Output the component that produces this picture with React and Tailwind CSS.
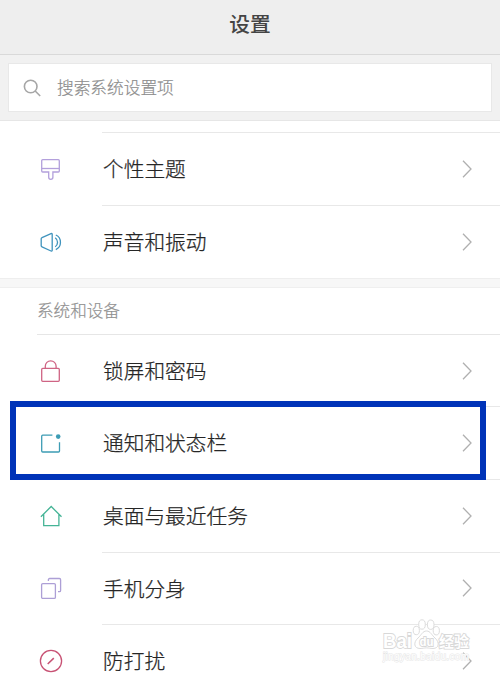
import { clsx } from 'clsx'

const BrushIcon = () => (
  <>
    <path d="M3.7 2.7h15.6a1 1 0 0 1 1 1v10.3a1 1 0 0 1-1 1h-5.4v5.2a2 2 0 0 1-4.2 0V15H3.7a1 1 0 0 1-1-1V3.7a1 1 0 0 1 1-1z" />
    <path d="M2.7 11.5h17.6" />
  </>
)

const SpeakerIcon = () => (
  <>
    <path d="M2.2 8.8q0-.8.8-1.1L12 3.6q1.2-.4 1.2.7v16q0 1.1-1.2.7L3 16.9q-.8-.3-.8-1.1z" />
    <path d="M16.2 7.8a5.5 5.5 0 0 1 0 9" />
    <path d="M16.8 5c6.2 2.6 6.2 12 0 14.6" />
  </>
)

const LockIcon = () => (
  <>
    <rect x="2.7" y="9.4" width="17.6" height="12.9" rx="1" />
    <path d="M6.3 9.4V7.2a5.4 5.4 0 0 1 10.8 0v2.2" />
  </>
)

const NoticeIcon = () => (
  <>
    <path d="M13.4 4.2H3.7a1 1 0 0 0-1 1V20a1 1 0 0 0 1 1h15.800a1 1 0 0 0 1-1v-8.8" />
    <circle cx="19.2" cy="5.6" r="2.3" fill="currentColor" stroke="none" />
  </>
)

const HomeIcon = () => (
  <path d="M1.9 12.7 12.2 2.5l10.3 10.2M4.7 10.2v11.4h15.2V10.2" />
)

const CloneIcon = () => (
  <>
    <rect x="2.6" y="7.6" width="13.8" height="14.8" rx="1.2" />
    <path d="M9.4 5V3.7a1.2 1.2 0 0 1 1.2-1.2h9.8a1.2 1.2 0 0 1 1.2 1.2v10.8a1.2 1.2 0 0 1-1.2 1.2H19" />
  </>
)

const QuietIcon = () => (
  <>
    <circle cx="12" cy="12" r="10.6" />
    <path d="m8.7 15 6.1-5.9" strokeWidth="1.5" />
  </>
)

const PERSONAL = [
  { label: '个性主题', color: 'text-[#b3a0dc]', Icon: BrushIcon },
  { label: '声音和振动', color: 'text-[#3f93bd]', Icon: SpeakerIcon },
]

const DEVICE = [
  { label: '锁屏和密码', color: 'text-[#cf6484]', Icon: LockIcon },
  { label: '通知和状态栏', color: 'text-[#3d9cb4]', Icon: NoticeIcon },
  { label: '桌面与最近任务', color: 'text-[#45b496]', Icon: HomeIcon },
  { label: '手机分身', color: 'text-[#ad9fd6]', Icon: CloneIcon },
  { label: '防打扰', color: 'text-[#c85274]', Icon: QuietIcon },
]

function Row({ label, color, Icon, className, divided = true }) {
  return (
    <div className={clsx('flex pl-[39px]', className)}>
      <div className="flex w-[63px] shrink-0 items-center pt-px">
        <svg viewBox="0 0 24 24" fill="none" stroke="currentColor" strokeWidth="1.3" className={clsx('size-6', color)}>
          <Icon />
        </svg>
      </div>
      <div className={clsx('flex flex-1 items-center justify-between border-t pr-7', divided ? 'border-[#e8e8e8]' : 'border-transparent')}>
        <span className="pl-px pt-[3px] text-[20.7px] font-light leading-none text-[#262626] [-webkit-text-stroke:0.25px]">{label}</span>
        <svg viewBox="0 0 10 18" fill="none" stroke="#b0b0b0" strokeWidth="1.3" className="h-[18px] w-[10px]">
          <path d="m1 .8 8 8.2-8 8.2" />
        </svg>
      </div>
    </div>
  )
}

function Watermark() {
  return (
    <svg viewBox="0 0 92 46" className="absolute left-[381px] top-[618px] h-[46px] w-[92px]">
      <g fill="#fff" stroke="#dcdcdc" strokeWidth="1">
        <ellipse cx="35.3" cy="12.5" rx="3.1" ry="4.2" />
        <ellipse cx="41" cy="6.5" rx="3.3" ry="4.7" />
        <ellipse cx="49.7" cy="6.7" rx="3.3" ry="4.7" />
        <ellipse cx="55.3" cy="12.7" rx="3.1" ry="4.2" />
        <path d="M45.5 13c4 0 5 4 8.500 7 5 4.500 4 10.500-2 10.500-3 0-4-.6-6.500-.6s-3.500.6-6.500.6c-6 0-7-6-2-10.500 3.500-3 4.500-7 8.500-7z" />
      </g>
      <g fill="#fff" stroke="#d8d8d8" strokeWidth="1.8" paintOrder="stroke" className="font-bold">
        <text x="2" y="30" fontSize="20" textLength="29" lengthAdjust="spacingAndGlyphs">Bai</text>
        <text x="38.5" y="28" fontSize="12" textLength="14" lengthAdjust="spacingAndGlyphs">du</text>
        <text x="58" y="29" fontSize="15" textLength="30">经验</text>
      </g>
      <text x="2" y="41.5" fontSize="10" fill="#fff" stroke="#e6e6e6" strokeWidth="1" paintOrder="stroke" textLength="86">jingyan.baidu.com</text>
    </svg>
  )
}

export default function App() {
  return (
    <div className="relative h-[674px] w-[500px] overflow-hidden bg-white font-['Liberation_Sans','Noto_Sans_CJK_SC',sans-serif]">

      {/* Title bar */}
      <header className="flex h-[55px] items-center justify-center border-b border-[#d9d9d9] bg-[#eeeeee] pb-[3px]">
        <h1 className="text-[20.7px] font-medium leading-none text-[#444444]">设置</h1>
      </header>

      {/* Search */}
      <div className="h-[66px] border-b border-[#e6e6e6] bg-[#f1f1f1] px-2 pt-2">
        <div className="flex h-[49px] items-center border border-[#e8e8e8] bg-white pl-[14px]">
          <svg viewBox="0 0 18 18" fill="none" stroke="#a6a6a6" strokeWidth="1.6" className="size-[18px]">
            <circle cx="7.7" cy="7.5" r="6.3" />
            <path d="m12.2 12 5 5" />
          </svg>
          <span className="ml-4 pt-[3px] text-[16.7px] font-light leading-none text-[#8c8c8c] [-webkit-text-stroke:0.2px]">搜索系统设置项</span>
        </div>
      </div>

      <section className="border-b border-[#eeeeee] pt-[11px]">
        {PERSONAL.map(item => (
          <Row key={item.label} {...item} className="h-[73px]" />
        ))}
      </section>

      <div className="h-[9px] border-b border-[#efefef] bg-[#f7f7f7]" />

      <section>
        <div className="ml-[37px] flex h-[47px] items-center border-b border-[#e6e6e6]">
          <h2 className="pt-[3px] text-[16.6px] font-light leading-none text-[#909090] [-webkit-text-stroke:0.2px]">系统和设备</h2>
        </div>
        {DEVICE.map((item, i) => (
          <Row key={item.label} {...item} divided={i > 0} className={i > 0 ? 'h-[72.6px]' : 'h-[71.4px]'} />
        ))}
      </section>

      {/* Highlighted row */}
      <div className="absolute left-[10px] top-[401px] h-[79px] w-[476px] border-6 border-[#0033b8]" />

      <Watermark />
    </div>
  )
}
